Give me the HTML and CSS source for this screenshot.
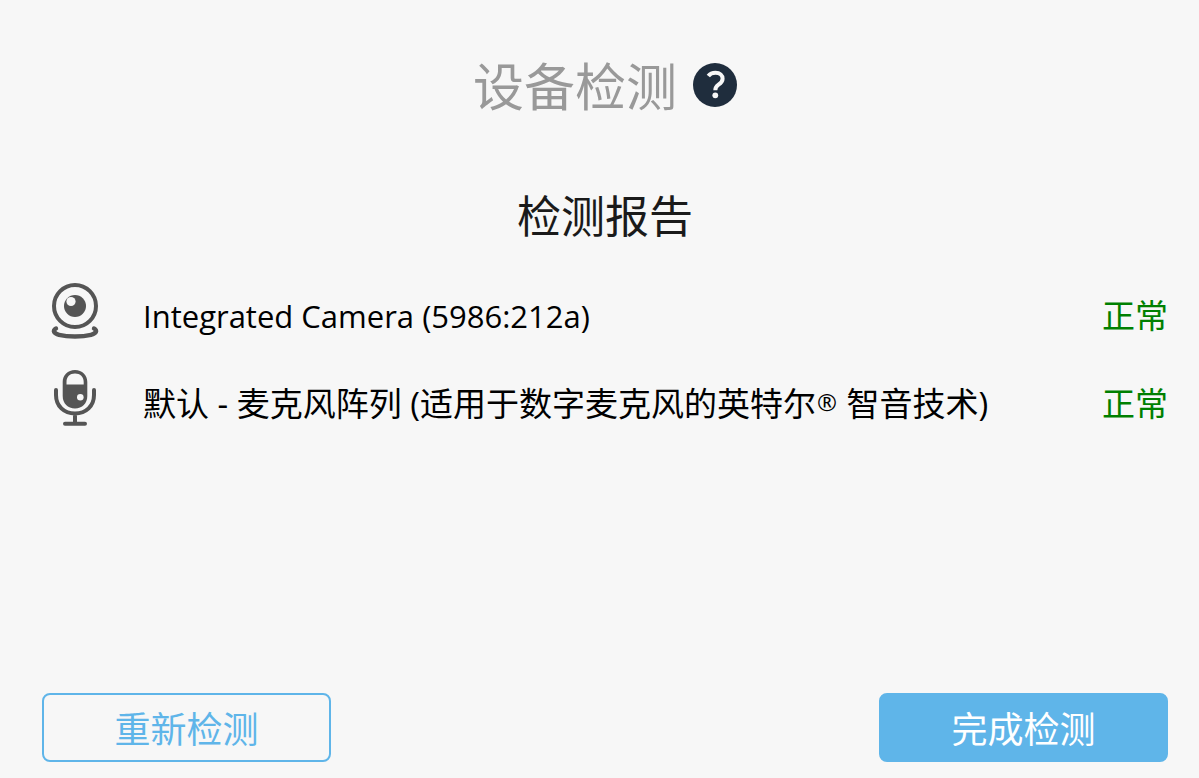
FILE: index.html
```html
<!DOCTYPE html>
<html lang="zh-CN">
<head>
<meta charset="utf-8">
<meta name="viewport" content="width=device-width, initial-scale=1">
<title>设备检测</title>
<link rel="stylesheet" href="styles.css">
</head>
<body>
<main class="page">
  <header class="header">
    <h1 class="title">设备检测</h1>
    <button class="help" type="button" aria-label="帮助">
      <svg class="help-icon" viewBox="0 0 44 44" aria-hidden="true">
        <circle cx="22" cy="22" r="22" fill="#1f2d3d"/>
        <path d="M15.300 13C17 10.700 19.600 9.700 22.500 9.700C26.900 9.700 29.600 12.200 29.600 15.700C29.600 18.800 27.700 20.200 25.500 21.700C23.300 23.200 22.300 24.200 22.300 27.300" fill="none" stroke="#f7f7f7" stroke-width="4"/>
        <circle cx="22.300" cy="32.300" r="2.900" fill="#f7f7f7"/>
      </svg>
    </button>
  </header>
  <h2 class="subtitle">检测报告</h2>
  <ul class="report">
    <li class="row">
      <svg class="device-icon" viewBox="0 0 50 60" aria-hidden="true">
        <circle cx="25" cy="26" r="21" fill="none" stroke="#555" stroke-width="4"/>
        <circle cx="25" cy="26" r="11" fill="#555"/>
        <circle cx="21" cy="21.500" r="4.600" fill="#f7f7f7"/>
        <path d="M6 48.500C2 50.500 4 53.500 9 54.800C18 57 32 57 41 54.800C46 53.500 48 50.500 44 48.500" fill="none" stroke="#555" stroke-width="4.400" stroke-linecap="round"/>
      </svg>
      <span class="device device-latin">Integrated Camera (5986:212a)</span>
      <span class="status">正常</span>
    </li>
    <li class="row">
      <svg class="device-icon" viewBox="0 0 50 60" aria-hidden="true">
        <path fill-rule="evenodd" d="M25 2C32.200 2 37.300 7 37.300 14V28C37.300 35.500 32.200 40.500 25 40.500S12.700 35.500 12.700 28V14C12.700 7 17.800 2 25 2ZM16.500 16.500H33.700V14C33.700 9 30.200 5.600 25 5.600S16.500 9 16.500 14Z" fill="#555"/>
        <circle cx="30.300" cy="29.300" r="3.300" fill="#f7f7f7"/>
        <path d="M6 22V27C6 38 14 45.500 25 45.500S44 38 44 27V22M25 45.500V55M15 55.700H35" fill="none" stroke="#555" stroke-width="4" stroke-linecap="round"/>
      </svg>
      <span class="device">默认 - 麦克风阵列 (适用于数字麦克风的英特尔<span class="mark">®</span> 智音技术)</span>
      <span class="status">正常</span>
    </li>
  </ul>
  <footer class="actions">
    <button class="button button-outline" type="button">重新检测</button>
    <button class="button button-solid" type="button">完成检测</button>
  </footer>
</main>
</body>
</html>
```
FILE: styles.css
```css
* {
  box-sizing: border-box;
}

body {
  margin: 0;
  background: #f7f7f7;
  color: #000;
  font-family: "Open Sans", "Noto Sans CJK SC", sans-serif;
}

.page {
  display: flex;
  flex-direction: column;
  min-height: 100vh;
  padding: 48px 31px 16px 42px;
}

.header {
  display: flex;
  align-items: center;
  justify-content: center;
  gap: 16px;
}

.title {
  margin: 0;
  color: #999;
  font-size: 51px;
  font-weight: 400;
  line-height: 76px;
}

.help {
  width: 44px;
  height: 44px;
  margin-bottom: 2px;
  padding: 0;
  border: 0;
  border-radius: 50%;
  background: none;
}

.help-icon {
  display: block;
  width: 100%;
  height: 100%;
}

.subtitle {
  margin: 60px 0 24px;
  color: #1a1a1a;
  font-size: 44px;
  font-weight: 400;
  line-height: 64px;
  text-align: center;
}

.report {
  margin: 0;
  padding: 0;
  list-style: none;
}

.row {
  display: flex;
  align-items: center;
  min-height: 88px;
  padding-left: 8px;
  font-size: 33px;
  line-height: 48px;
}

.device-icon {
  flex: none;
  width: 50px;
  height: 60px;
  margin: 0 43px 12px 0;
}

.device {
  flex: 1;
}

.device-latin {
  font-size: 31px;
}

.mark {
  padding: 0 1px;
  font-size: 24px;
  line-height: 1;
  vertical-align: 5px;
}

.status {
  color: #008000;
}

.actions {
  display: flex;
  justify-content: space-between;
  margin-top: auto;
}

.button {
  width: 289px;
  height: 69px;
  padding: 4px 0 0;
  border: 2px solid #5fb5e9;
  border-radius: 8px;
  font-family: inherit;
  font-size: 36px;
  line-height: 48px;
}

.button-outline {
  background: transparent;
  color: #5fb5e9;
}

.button-solid {
  background: #5fb5e9;
  color: #fff;
}
```
